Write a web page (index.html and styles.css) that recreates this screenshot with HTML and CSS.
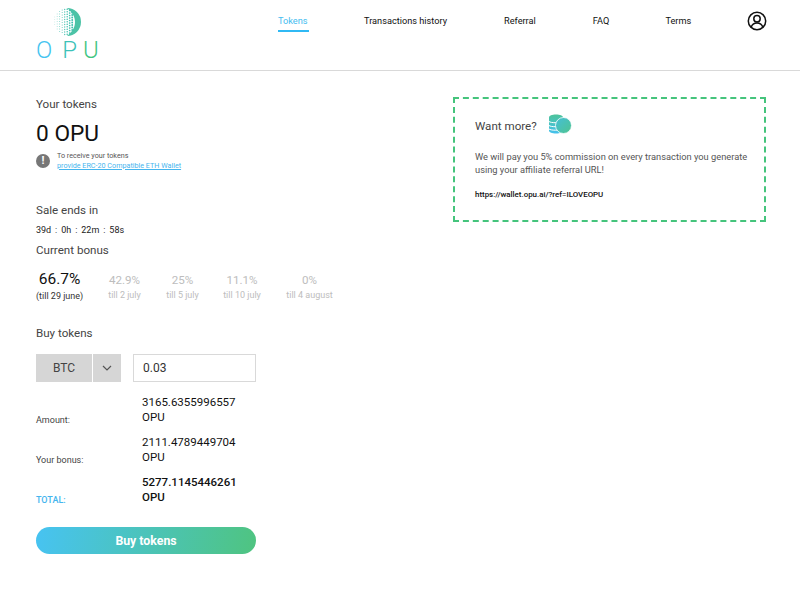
FILE: index.html
```html
<!DOCTYPE html>
<html lang="en">
<head>
<meta charset="utf-8">
<title>OPU Wallet</title>
<link rel="stylesheet" href="styles.css">
</head>
<body>
<header class="header">
  <a class="logo" href="#">
    <svg class="logo-mark" width="30" height="30" viewBox="0 0 30 30" fill="none" stroke="#3fbfae" stroke-linecap="round" stroke-dasharray="0 2.5">
      <path d="M15 1A14 14 0 0 1 15 29C21 24 23 20 23 15S21 6 15 1Z" fill="#4cc3a6" stroke="none"/>
      <path d="M20.2 5.5V25" stroke-width="1.9"/>
      <path d="M17.7 3.5V27" stroke-width="1.7"/>
      <path d="M15.2 2.2V28" stroke-width="1.5"/>
      <path d="M12.7 2.5V28" stroke-width="1.3" opacity=".9"/>
      <path d="M10.2 3V27" stroke-width="1.15" opacity=".8"/>
      <path d="M7.7 4.5V26" stroke-width="1" opacity=".7"/>
      <path d="M5.2 7V24" stroke-width=".85" opacity=".55"/>
      <path d="M2.7 10V20" stroke-width=".7" opacity=".4"/>
    </svg>
    <span class="logo-text"><span class="l-o">O</span><span class="l-p">P</span><span class="l-u">U</span></span>
  </a>
  <nav class="nav">
    <a class="nav-link nav-active" href="#">Tokens</a>
    <a class="nav-link nav-tx" href="#">Transactions history</a>
    <a class="nav-link nav-ref" href="#">Referral</a>
    <a class="nav-link nav-faq" href="#">FAQ</a>
    <a class="nav-link nav-terms" href="#">Terms</a>
    <svg class="user-icon" width="20" height="20" viewBox="0 0 20 20" fill="none" stroke="#111" stroke-width="1.5">
      <circle cx="10" cy="10" r="8.7"/>
      <circle cx="10" cy="7.8" r="3.2"/>
      <path d="M4.2 16.2C5 13.4 7.3 12 10 12s5 1.4 5.8 4.2"/>
    </svg>
  </nav>
</header>
<main class="main">
  <section class="left">
    <h2 class="heading">Your tokens</h2>
    <div class="balance">0 OPU</div>
    <div class="notice">
      <span class="notice-icon">!</span>
      <div class="notice-text">
        <div>To receive your tokens</div>
        <a class="notice-link" href="#">provide ERC-20 Compatible ETH Wallet</a>
      </div>
    </div>
    <h2 class="heading heading-sale">Sale ends in</h2>
    <div class="countdown">39d : 0h : 22m : 58s</div>
    <h2 class="heading heading-bonus">Current bonus</h2>
    <div class="bonus-row">
      <div class="bonus bonus-now"><div class="pct">66.7%</div><div class="till">(till 29 june)</div></div>
      <div class="bonus b2"><div class="pct">42.9%</div><div class="till">till 2 july</div></div>
      <div class="bonus b3"><div class="pct">25%</div><div class="till">till 5 july</div></div>
      <div class="bonus b4"><div class="pct">11.1%</div><div class="till">till 10 july</div></div>
      <div class="bonus b5"><div class="pct">0%</div><div class="till">till 4 august</div></div>
    </div>
    <h2 class="heading heading-buy">Buy tokens</h2>
    <div class="buy-form">
      <div class="select">
        <span class="select-value">BTC</span>
        <span class="select-arrow"><svg width="10" height="6" viewBox="0 0 10 6" fill="none" stroke="#555" stroke-width="1.2"><path d="M1 1l4 4 4-4"/></svg></span>
      </div>
      <input class="amount-input" type="text" value="0.03">
    </div>
    <div class="sum-row"><span class="sum-label">Amount:</span><span class="sum-value">3165.6355996557 OPU</span></div>
    <div class="sum-row"><span class="sum-label">Your bonus:</span><span class="sum-value">2111.4789449704 OPU</span></div>
    <div class="sum-row sum-total"><span class="sum-label">TOTAL:</span><span class="sum-value">5277.1145446261 OPU</span></div>
    <button class="buy-btn" type="button">Buy tokens</button>
  </section>
  <aside class="promo">
    <div class="promo-head">
      <span class="promo-title">Want more?</span>
      <svg class="coins" width="24" height="20" viewBox="0 0 24 20">
        <defs>
          <linearGradient id="c1" x1="0" x2="0" y1="0" y2="1"><stop offset="0" stop-color="#4cc39a"/><stop offset="1" stop-color="#45c1ee"/></linearGradient>
          <linearGradient id="c2" x1="0" x2="1" y1="0" y2="1"><stop offset="0" stop-color="#45bfd8"/><stop offset="1" stop-color="#4fc48f"/></linearGradient>
        </defs>
        <path d="M1 3.5C1 1.5 4 .5 8 .5s7 1 7 3v13c0 2-3 3-7 3s-7-1-7-3z" fill="url(#c1)"/>
        <path d="M1 7.5c2 1.6 10 1.6 14 0M1 11.5c2 1.6 10 1.6 14 0M1 15c2 1.6 10 1.6 14 0" stroke="#fff" stroke-width="1" fill="none"/>
        <circle cx="15.5" cy="11.5" r="8" fill="url(#c2)" stroke="#fff" stroke-width="0.8"/>
      </svg>
    </div>
    <p class="promo-text">We will pay you 5% commission on every transaction you generate using your affiliate referral URL!</p>
    <div class="promo-url">https://wallet.opu.ai/?ref=ILOVEOPU</div>
  </aside>
</main>
</body>
</html>
```
FILE: styles.css
```css
* { box-sizing: border-box; }
html, body { margin: 0; padding: 0; }
body {
  width: 800px;
  height: 600px;
  overflow: hidden;
  background: #fff;
  color: #444;
  font-family: Roboto, "Liberation Sans", sans-serif;
}
a { text-decoration: none; color: inherit; }

.header {
  height: 71px;
  border-bottom: 1px solid #d9d9d9;
  display: flex;
  padding-left: 36px;
}
.logo { width: 242px; padding-top: 7px; display: flex; flex-direction: column; }
.logo-mark { margin-left: 16px; display: block; }
.logo-text {
  font-size: 24px;
  font-weight: 300;
  line-height: 22px;
  white-space: nowrap;
  margin-top: 2px;
}
.l-o { color: #45c4f0; letter-spacing: 10px; }
.l-p { color: #3cc2b8; letter-spacing: 6px; }
.l-u { color: #41c57f; }

.nav { display: flex; align-items: flex-start; padding-top: 11px; }
.nav-link {
  font-size: 9.2px;
  line-height: 19px;
  height: 21px;
  color: #111;
  white-space: nowrap;
}
.nav-active { color: #45bdf0; border-bottom: 2px solid #30b9f4; width: 31px; }
.nav-tx { margin-left: 55px; }
.nav-ref { margin-left: 57px; }
.nav-faq { margin-left: 57px; }
.nav-terms { margin-left: 56px; }
.user-icon { margin-left: 56px; }

.main { display: flex; padding: 26px 34px 0 36px; }
.left { width: 417px; }
.heading { margin: 0; font-size: 11.6px; font-weight: 400; line-height: 14px; color: #444; }
.balance { font-size: 22.7px; line-height: 26px; color: #111; margin-top: 10px; }
.notice { display: flex; align-items: center; margin-top: 4px; }
.notice-icon {
  width: 14px;
  height: 14px;
  border-radius: 50%;
  background: #777;
  color: #fff;
  font-size: 11px;
  font-weight: 700;
  line-height: 14px;
  text-align: center;
  margin-right: 7px;
}
.notice-text { font-size: 7.2px; line-height: 9.5px; color: #555; }
.notice-link { color: #45b5ee; text-decoration: underline; }
.heading-sale { margin-top: 33px; }
.countdown { font-size: 9px; line-height: 12px; color: #222; margin-top: 7px; word-spacing: 1.7px; }
.heading-bonus { margin-top: 7px; }
.bonus-row { display: flex; margin-top: 13px; height: 32px; }
.bonus { text-align: center; color: #bdbdbd; white-space: nowrap; }
.bonus .pct { font-size: 11.6px; line-height: 18px; padding-top: 1px; }
.bonus .till { font-size: 9px; line-height: 12px; }
.bonus-now { width: 47px; color: #111; }
.bonus-now .pct { font-size: 15.5px; padding-top: 0; }
.bonus-now .till { color: #333; line-height: 16px; }
.b2 { margin-left: 25px; width: 33px; }
.b3 { margin-left: 25px; width: 33px; }
.b4 { margin-left: 24px; width: 38px; }
.b5 { margin-left: 25px; width: 47px; }
.heading-buy { margin-top: 24px; }
.buy-form { display: flex; margin-top: 14px; }
.select { display: flex; height: 28px; width: 85px; background: #d6d6d6; }
.select-value { width: 57px; border-right: 1px solid #fff; text-align: center; font-size: 12px; line-height: 28px; color: #444; }
.select-arrow { flex: 1; display: flex; align-items: center; justify-content: center; }
.amount-input {
  margin-left: 12px;
  width: 123px;
  height: 28px;
  border: 1px solid #d9d9d9;
  padding: 0 9px;
  font: 12px Roboto, "Liberation Sans", sans-serif;
  color: #333;
  outline: none;
}
.sum-row { display: flex; align-items: flex-end; width: 220px; height: 40px; }
.buy-form + .sum-row { margin-top: 3px; }
.sum-label { width: 106px; font-size: 9px; line-height: 14px; color: #444; margin-bottom: -2px; }
.sum-value { width: 110px; font-size: 11.5px; line-height: 15px; color: #111; }
.sum-total .sum-label { color: #45b5ee; font-weight: 500; }
.sum-total .sum-value { font-weight: 500; }
.buy-btn {
  display: block;
  margin-top: 22px;
  width: 220px;
  height: 27px;
  border: none;
  border-radius: 14px;
  background: linear-gradient(100deg, #47c3f2, #4fc480);
  color: #fff;
  font: 700 12.3px Roboto, "Liberation Sans", sans-serif;
}

.promo {
  width: 313px;
  height: 125px;
  border: 2px dashed #45c47c;
  padding: 15px 14px 0 20px;
}
.promo-head { display: flex; align-items: center; }
.promo-title { font-size: 11.6px; color: #444; }
.coins { margin-left: 11px; margin-bottom: 4px; }
.promo-text { margin: 12px 0 0; font-size: 9.3px; line-height: 13px; color: #555; }
.promo-url { margin-top: 13px; font-size: 7.9px; line-height: 12px; font-weight: 500; color: #111; }
```
